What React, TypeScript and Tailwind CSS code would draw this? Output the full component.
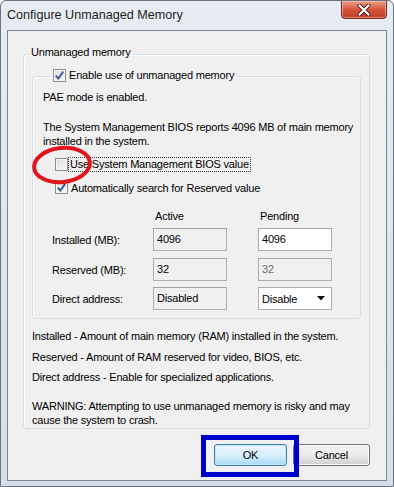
import React from 'react';

const Check: React.FC<{ checked?: boolean }> = ({ checked }) => (
  <span className="w-[13px] h-[13px] shrink-0 border border-[#8e8f8f] bg-gradient-to-br from-[#dedede] to-[#fbfbfb] shadow-[inset_0_0_0_1px_#f4f4f4] flex items-center justify-center">
    {checked && (
      <svg width="11" height="11" viewBox="0 0 11 11">
        <path d="M1.8 5.6 L4.3 8.6 L9.2 1.6" fill="none" stroke="#4a5f97" strokeWidth="2.1" strokeLinejoin="round" />
      </svg>
    )}
  </span>
);

const Field: React.FC<{ value: string; white?: boolean; dim?: boolean }> = ({ value, white, dim }) => (
  <div
    className={`w-[74px] h-[23px] border border-[#abadb3] border-t-[#a0a4aa] pl-[3px] pt-[3px] leading-[14px] ${
      white ? 'bg-white text-black' : dim ? 'bg-[#f0f0f0] text-[#6d6d6d]' : 'bg-[#f0f0f0] text-black'
    }`}
  >
    {value}
  </div>
);

const Row: React.FC<{ label: string; children: React.ReactNode; className?: string }> = ({ label, children, className }) => (
  <div className={`flex items-start ${className ?? ''}`}>
    <span className="w-[101px] pt-[5px] leading-[14px] whitespace-nowrap">{label}</span>
    {children}
  </div>
);

export default function App() {
  return (
    <div
      className="relative w-[394px] h-[487px] flex flex-col bg-gradient-to-b from-[#e7ecf2] to-[#d7dee6] border border-[#6a7482] rounded-t-[6px] text-[11px] tracking-[-0.2px] text-black overflow-hidden whitespace-nowrap"
      style={{ fontFamily: '"Liberation Sans", Arial, sans-serif' }}
    >
      {/* title bar */}
      <div className="h-[29px] flex items-start justify-between pl-[6px] pr-[6px] shrink-0">
        <span className="mt-[7px] text-[12.6px] tracking-normal leading-[15px] text-[#1e1e1e]">Configure Unmanaged Memory</span>
        <div className="w-[46px] h-[19px] -mt-px rounded-b-[4px] border border-[#6f2a21] bg-gradient-to-b from-[#eba08a] via-[#d4553a] to-[#c23d25] shadow-[inset_0_0_0_1px_rgba(255,220,210,0.45)] flex items-center justify-center">
          <svg width="14" height="12" viewBox="0 0 14 12">
            <path d="M2.5 1.5 L11.5 10.5 M11.5 1.5 L2.5 10.5" stroke="#4a1a14" strokeWidth="4" strokeLinecap="round" />
            <path d="M2.5 1.5 L11.5 10.5 M11.5 1.5 L2.5 10.5" stroke="#ffffff" strokeWidth="2.2" strokeLinecap="round" />
          </svg>
        </div>
      </div>

      {/* client area */}
      <div className="flex-1 ml-[6px] mr-[6px] mb-[5px] border border-[#7c8591] bg-[#f0f0f0] flex flex-col">
        <fieldset className="mt-[14px] ml-[15px] w-[347px] border border-[#d5dfe5] rounded-[3px] shadow-[inset_1px_1px_0_#ffffff] pb-[1px]">
          <legend className="ml-[5px] px-[2px] leading-[14px] pb-[4px]">Unmanaged memory</legend>

          <fieldset className="mt-[5px] ml-[8px] w-[329px] border border-[#d5dfe5] rounded-[3px] shadow-[inset_1px_1px_0_#ffffff] pl-[10px] pb-[8px]">
            <legend className="ml-[8px] px-[2px] pb-[2px] flex items-center gap-[3px] leading-[14px]">
              <Check checked />
              <span>Enable use of unmanaged memory</span>
            </legend>

            <p className="mt-[6px] leading-[14px]">PAE mode is enabled.</p>
            <p className="mt-[16px] leading-[14px]">
              The System Management BIOS reports 4096 MB of main memory
              <br />
              installed in the system.
            </p>

            <div className="mt-[8px] ml-[12px] h-[17px] flex items-center">
              <Check />
              <span className="ml-0 px-[1px] border border-dotted border-[#333] leading-[13px]">Use System Management BIOS value</span>
            </div>
            <div className="mt-[6px] ml-[12px] h-[17px] flex items-center gap-[3px]">
              <Check checked />
              <span className="leading-[14px]">Automatically search for Reserved value</span>
            </div>

            <div className="mt-[13px] ml-[9px] flex leading-[14px]">
              <span className="w-[101px]" />
              <span className="w-[105px] pl-[2px]">Active</span>
              <span className="pl-[2px]">Pending</span>
            </div>

            <div className="ml-[9px]">
              <Row label="Installed (MB):" className="mt-[5px]">
                <Field value="4096" />
                <div className="ml-[31px]">
                  <Field value="4096" white />
                </div>
              </Row>
              <Row label="Reserved (MB):" className="mt-[7px]">
                <Field value="32" />
                <div className="ml-[31px]">
                  <Field value="32" dim />
                </div>
              </Row>
              <Row label="Direct address:" className="mt-[6px]">
                <Field value="Disabled" />
                <div className="ml-[31px] w-[74px] h-[23px] border border-[#abadb3] bg-white pl-[3px] pr-[6px] flex items-center justify-between">
                  <span className="leading-[14px]">Disable</span>
                  <svg width="8" height="5" viewBox="0 0 8 5">
                    <path d="M0 0 L8 0 L4 4.5 Z" fill="#111" />
                  </svg>
                </div>
              </Row>
            </div>
          </fieldset>

          <div className="pl-[8px] leading-[14px]">
            <p className="mt-[10px]">Installed - Amount of main memory (RAM) installed in the system.</p>
            <p className="mt-[7px]">Reserved - Amount of RAM reserved for video, BIOS, etc.</p>
            <p className="mt-[6px]">Direct address - Enable for specialized applications.</p>
            <p className="mt-[15px]">
              WARNING: Attempting to use unmanaged memory is risky and may
              <br />
              cause the system to crash.
            </p>
          </div>
        </fieldset>

        <div className="mt-[15px] ml-[15px] w-[347px] flex justify-end gap-[6px]">
          <button className="w-[73px] h-[22px] rounded-[3px] border border-[#3c7fb1] bg-gradient-to-b from-[#eaf6fd] via-[#d9f0fc] to-[#a7d9f5] shadow-[inset_0_0_0_1px_#c4e5f6] leading-[14px] font-normal">
            OK
          </button>
          <button className="w-[77px] h-[22px] rounded-[3px] border border-[#707070] bg-gradient-to-b from-[#f2f2f2] via-[#ebebeb] to-[#cfcfcf] shadow-[inset_0_0_0_1px_#fcfcfc] leading-[14px] font-normal">
            Cancel
          </button>
        </div>
      </div>

      {/* annotations */}
      <div className="absolute left-[200px] top-[434px] w-[98px] h-[42px] border-[5px] border-[#0000cc]" />
      <svg className="absolute left-[28px] top-[143px]" width="66" height="42" viewBox="0 0 66 42">
        <ellipse cx="33" cy="21" rx="28" ry="17" fill="none" stroke="#e0141c" strokeWidth="4" transform="rotate(-6 33 21)" />
      </svg>
    </div>
  );
}
